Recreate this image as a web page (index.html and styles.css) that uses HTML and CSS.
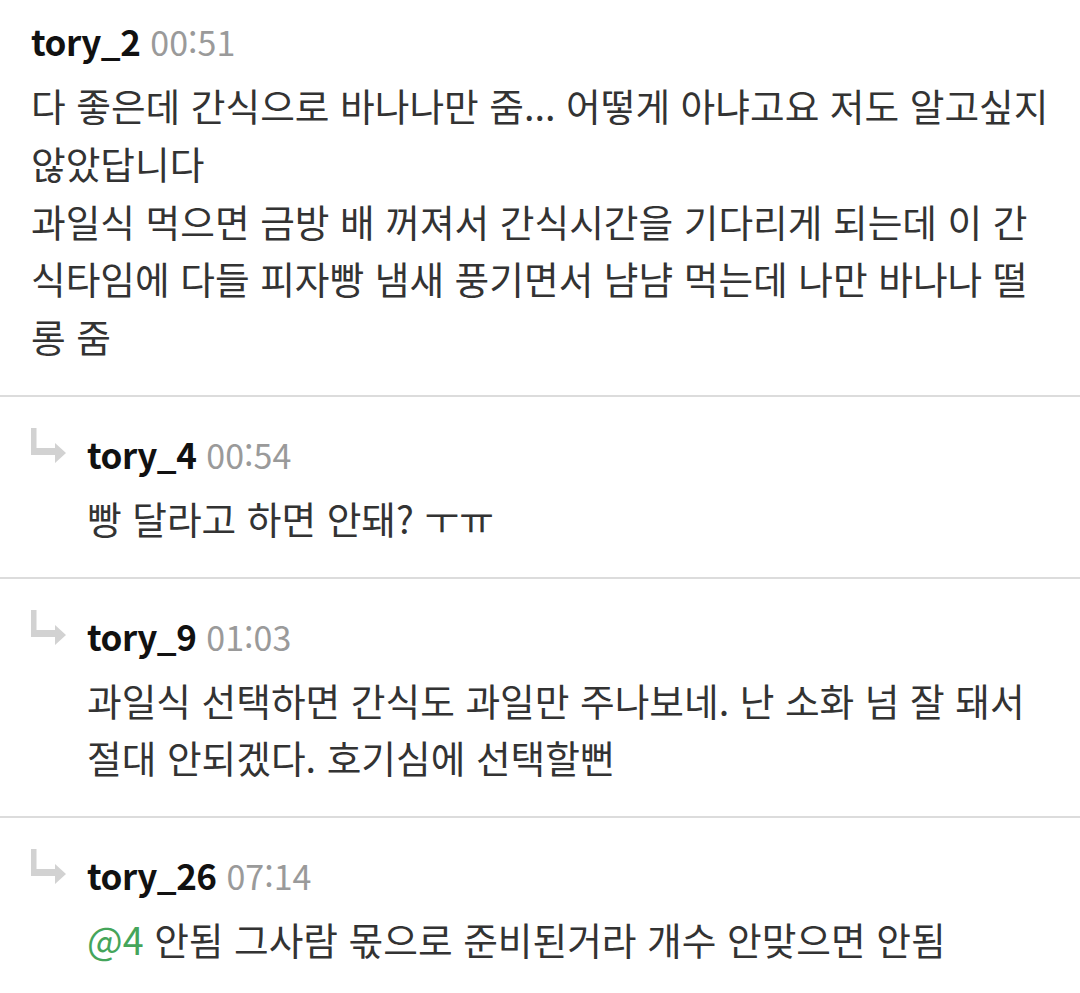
FILE: index.html
```html
<!DOCTYPE html>
<html lang="ko">
<head>
<meta charset="utf-8">
<link rel="stylesheet" href="styles.css">
</head>
<body>
<div class="list">
  <div class="comment">
    <div class="head"><span class="name">tory_2</span><span class="time">00:51</span></div>
    <div class="body">다 좋은데 간식으로 바나나만 줌... 어떻게 아냐고요 저도 알고싶지<br>않았답니다<br>과일식 먹으면 금방 배 꺼져서 간식시간을 기다리게 되는데 이 간<br>식타임에 다들 피자빵 냄새 풍기면서 냠냠 먹는데 나만 바나나 떨<br>롱 줌</div>
  </div>
  <div class="comment reply">
    <svg class="arrow" width="36" height="36" viewBox="0 0 36 36"><path d="M0 0 H5.5 V20 H24 V15 L35 25 L24 35 V27 H0 Z" fill="#d2d2d2"/></svg>
    <div class="content">
      <div class="head"><span class="name">tory_4</span><span class="time">00:54</span></div>
      <div class="body">빵 달라고 하면 안돼? ㅜㅠ</div>
    </div>
  </div>
  <div class="comment reply">
    <svg class="arrow" width="36" height="36" viewBox="0 0 36 36"><path d="M0 0 H5.5 V20 H24 V15 L35 25 L24 35 V27 H0 Z" fill="#d2d2d2"/></svg>
    <div class="content">
      <div class="head"><span class="name">tory_9</span><span class="time">01:03</span></div>
      <div class="body">과일식 선택하면 간식도 과일만 주나보네. 난 소화 넘 잘 돼서<br>절대 안되겠다. 호기심에 선택할뻔</div>
    </div>
  </div>
  <div class="comment reply last">
    <svg class="arrow" width="36" height="36" viewBox="0 0 36 36"><path d="M0 0 H5.5 V20 H24 V15 L35 25 L24 35 V27 H0 Z" fill="#d2d2d2"/></svg>
    <div class="content">
      <div class="head"><span class="name">tory_26</span><span class="time">07:14</span></div>
      <div class="body"><span class="mention">@4</span> 안됨 그사람 몫으로 준비된거라 개수 안맞으면 안됨</div>
    </div>
  </div>
</div>
</body>
</html>
```

FILE: styles.css
```css
html, body {
  margin: 0;
  padding: 0;
  background: #ffffff;
}
body {
  font-family: "Noto Sans CJK KR", "Noto Sans", sans-serif;
  width: 1080px;
  height: 993px;
  overflow: hidden;
}
.list {
  display: flex;
  flex-direction: column;
}
.comment {
  padding: 12px 20px 30px 31px;
  border-bottom: 2px solid #dcdcdc;
}
.comment.reply {
  padding-top: 28px;
  display: flex;
  align-items: flex-start;
}
.comment.last {
  border-bottom: none;
}
.head {
  height: 58px;
  line-height: 58px;
  white-space: nowrap;
}
.name {
  font-size: 35px;
  font-weight: 700;
  color: #111111;
  letter-spacing: -0.5px;
}
.time {
  font-size: 34px;
  color: #9a9a9a;
  margin-left: 10px;
}
.body {
  margin-top: 6px;
  font-size: 37.7px;
  line-height: 57.75px;
  color: #333333;
  white-space: nowrap;
}
.arrow {
  flex: none;
  margin-top: 3px;
  margin-right: 20px;
}
.content {
  flex: 1;
}
.mention {
  color: #45a55a;
}
```
